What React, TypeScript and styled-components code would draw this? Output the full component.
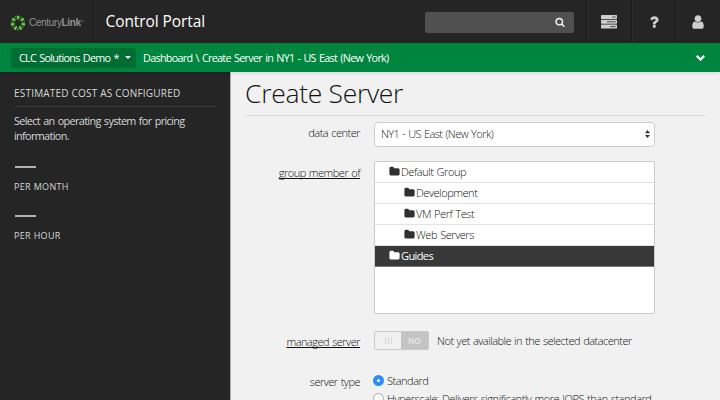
import React from "react";
import styled, { createGlobalStyle, css } from "styled-components";

const Global = createGlobalStyle`
  * { box-sizing: border-box; }
  html, body { margin: 0; }
  body {
    width: 720px;
    height: 400px;
    overflow: hidden;
    background: #f1f1f1;
    color: #333;
    font: 400 11px/15px "Open Sans", "Noto Sans", sans-serif;
  }
`;

const Page = styled.div`
  display: flex;
  flex-direction: column;
  width: 720px;
  height: 400px;
  overflow: hidden;
`;

const TopBar = styled.header`
  display: flex;
  flex: none;
  height: 43px;
  background: #252525;
`;

const Brand = styled.div`
  display: flex;
  align-items: center;
  width: 94px;
  padding: 2px 0 0 10px;
  border-right: 1px solid #1b1b1b;
  box-shadow: 1px 0 0 #2c2c2c;
`;

const BrandName = styled.span`
  margin-left: 3px;
  color: #929292;
  font: 400 10px/14px "Liberation Sans", Arial, sans-serif;
  letter-spacing: -0.35px;
  white-space: nowrap;
  b { font-weight: 700; }
  sup { font-size: 4px; line-height: 0; vertical-align: 3px; }
`;

const ProductName = styled.div`
  flex: 1;
  padding: 9px 0 0 11.5px;
  color: #fff;
  font-size: 15.5px;
  line-height: 24px;
  letter-spacing: -0.08px;
`;

const SearchBox = styled.div`
  display: flex;
  align-items: center;
  justify-content: flex-end;
  width: 149px;
  height: 21px;
  margin: 11.5px 12px 0 0;
  padding-right: 9px;
  border-radius: 2px;
  background: #505050;
  color: #f4f4f4;
`;

const TopButton = styled.div<{ $width: number }>`
  display: flex;
  align-items: center;
  justify-content: center;
  width: ${(p) => p.$width}px;
  padding-top: 1px;
  border-left: 1px solid #1b1b1b;
  box-shadow: inset 1px 0 0 #2c2c2c;
  color: #cfcfcf;
`;

const ContextBar = styled.nav`
  display: flex;
  align-items: center;
  flex: none;
  height: 29px;
  padding: 0 15px 0 11px;
  background: #00853f;
  color: #fff;
  font-size: 10.8px;
  letter-spacing: -0.7px;
  word-spacing: 1px;
  white-space: nowrap;
  z-index: 1;
  box-shadow: 0 1px 4px rgba(0, 0, 0, 0.12);
`;

const AccountMenu = styled.div`
  display: flex;
  align-items: center;
  justify-content: space-between;
  width: 125px;
  height: 20px;
  padding: 0 5px 1px 8px;
  border-radius: 2px;
  background: #006e33;
  letter-spacing: -0.69px;
`;

const Caret = styled.span`
  border: 3px solid transparent;
  border-top-color: #fff;
  border-bottom: 0;
`;

const Trail = styled.div`
  flex: 1;
  padding: 0 0 1px 7px;
`;

const Body = styled.div`
  display: flex;
  flex: 1;
  min-height: 0;
`;

const Sidebar = styled.aside`
  width: 230px;
  flex: none;
  padding: 13px 14px;
  background: #252525;
  color: #d8d8d8;
`;

const SideHeading = styled.h2`
  height: 22px;
  margin: 0 0 7px;
  border-bottom: 1px solid #3a3a3a;
  font-size: 10px;
  line-height: 16px;
  font-weight: 400;
  letter-spacing: 0.2px;
`;

const SideNote = styled.p`
  width: 190px;
  height: 29px;
  margin: 0;
  font-size: 10.8px;
  letter-spacing: -0.63px;
  word-spacing: 1px;
  line-height: 14.5px;
`;

const Price = styled.div`
  margin-top: 23px;
  height: 26px;
  font-size: 9px;
  line-height: 14px;
  letter-spacing: 0.33px;
`;

const Dash = styled.div`
  width: 21px;
  height: 2px;
  margin: 0 0 12px 1px;
  background: #b4b4b4;
`;

const Main = styled.main`
  flex: 1;
  min-width: 0;
  padding: 0 15px 0 14px;
  border-left: 1px solid #a9a9a9;
  color: #111;
`;

const Title = styled.h1`
  height: 44px;
  margin: 0 0 6px;
  border-bottom: 1px solid #d9d9d9;
  font-size: 26.5px;
  line-height: 43px;
  font-weight: 300;
  letter-spacing: -0.3px;
  white-space: nowrap;
`;

const contentText = css`
  font-size: 11px;
  font-weight: 300;
  letter-spacing: -0.5px;
  word-spacing: 0.7px;
  white-space: nowrap;
`;

const Field = styled.div<{ $height: number }>`
  display: flex;
  height: ${(p) => p.$height}px;
`;

const Label = styled.div<{ $top: number; $link?: boolean }>`
  width: 115px;
  padding-top: ${(p) => p.$top}px;
  margin-right: 14px;
  text-align: right;
  text-decoration: ${(p) => (p.$link ? "underline" : "none")};
  text-underline-offset: 1px;
  text-decoration-skip-ink: none;
  ${contentText}
`;

const Select = styled.div`
  display: flex;
  align-items: center;
  justify-content: space-between;
  width: 281px;
  height: 25px;
  padding: 0 4px 3px 6px;
  border: 1px solid #ccc;
  border-radius: 4px;
  background: #fff;
  color: #222;
  ${contentText}
  letter-spacing: -0.57px;
  svg { position: relative; top: 1px; }
`;

const GroupList = styled.div`
  width: 281px;
  height: 153px;
  border: 1px solid #ccc;
  border-radius: 2px;
  background: #fff;
`;

const GroupRow = styled.div<{ $nested?: boolean; $selected?: boolean }>`
  display: flex;
  align-items: center;
  gap: 1px;
  height: 21px;
  padding: 0 0 1px ${(p) => (p.$nested ? 29 : 14)}px;
  border-bottom: 1px solid #e3e3e3;
  color: #111;
  ${contentText}
  letter-spacing: -0.45px;
  svg { color: #303030; }
  ${(p) =>
    p.$selected &&
    css`
      background: #383838;
      border-color: #777;
      color: #fff;
      font-weight: 400;
      letter-spacing: -0.6px;
      svg { color: #fff; }
    `}
`;

const Toggle = styled.div`
  display: flex;
  width: 55px;
  height: 19px;
  border: 1px solid #c9c9c9;
  border-radius: 2px;
  background: #c4c4c4;
  overflow: hidden;
`;

const Knob = styled.div`
  display: flex;
  align-items: center;
  justify-content: center;
  gap: 2px;
  width: 26px;
  background: #f0f0f0;
`;

const Grip = styled.i`
  width: 1px;
  height: 7px;
  background: #d6d6d6;
`;

const ToggleText = styled.span`
  flex: 1;
  color: #e4e4e4;
  font: 700 8.5px/18px "Liberation Sans", Arial, sans-serif;
  text-align: center;
`;

const Hint = styled.span`
  padding: 2px 0 0 8px;
  ${contentText}
`;

const Options = styled.div`
  display: flex;
  flex-direction: column;
`;

const Option = styled.div`
  display: flex;
  align-items: center;
  gap: 3px;
  height: 18px;
  padding-bottom: 1px;
  ${contentText}
  letter-spacing: -0.47px;
`;

const Radio = styled.span<{ $on?: boolean }>`
  width: 11px;
  height: 11px;
  margin-left: -1px;
  border: ${(p) => (p.$on ? "4px solid #2c8df6" : "1px solid #aaa")};
  border-radius: 50%;
  background: #fff;
`;

const icons = {
  search:
    "M1216 832q0-185-131.5-316.5t-316.5-131.5-316.5 131.5-131.5 316.5 131.5 316.5 316.5 131.5 316.5-131.5 131.5-316.5zm512 832q0 52-38 90t-90 38q-54 0-90-38l-343-342q-179 124-399 124-143 0-273.5-55.5t-225-150-150-225-55.5-273.5 55.5-273.5 150-225 225-150 273.5-55.5 273.5 55.5 225 150 150 225 55.5 273.5q0 220-124 399l343 343q37 37 37 90z",
  folder:
    "M1728 608v704q0 92-66 158t-158 66h-1216q-92 0-158-66t-66-158v-960q0-92 66-158t158-66h320q92 0 158 66t66 158v32h672q92 0 158 66t66 158z",
  user:
    "M1536 1399q0 109-62.5 187t-150.5 78h-854q-88 0-150.5-78t-62.5-187q0-85 8.5-160.5t31.5-152 58.5-131 94-89 134.5-34.5q131 128 313 128t313-128q76 0 134.5 34.5t94 89 58.5 131 31.5 152 8.5 160.5zm-256-887q0 159-112.5 271.5t-271.5 112.5-271.5-112.5-112.5-271.5 112.5-271.5 271.5-112.5 271.5 112.5 112.5 271.5z",
  question:
    "M1088 1256v240q0 16-12 28t-28 12h-240q-16 0-28-12t-12-28v-240q0-16 12-28t28-12h240q16 0 28 12t12 28zm316-600q0 54-15.5 101t-35 76.5-55 59.5-57.5 43.5-61 35.5q-41 23-68.5 65t-27.5 67q0 17-12 32.5t-28 15.5h-240q-15 0-25.5-18.5t-10.5-37.5v-45q0-83 65-156.5t143-108.5q59-27 84-56t25-76q0-42-46.5-74t-107.5-32q-65 0-108 29-35 25-107 115-13 16-31 16-12 0-25-8l-164-125q-13-10-15.5-25t5.5-28q160-266 464-266 80 0 161 31t146 83 106 127.5 41 158.5z",
};

function Icon({ name, size }: { name: keyof typeof icons; size: number }) {
  return (
    <svg width={size} height={size} viewBox="0 0 1792 1792" fill="currentColor">
      <path d={icons[name]} />
    </svg>
  );
}

function BrandMark() {
  return (
    <svg width="16" height="16" viewBox="-8 -8 16 16">
      {Array.from({ length: 14 }, (_, i) => (
        <path
          key={i}
          d="M-.45 -3.4L-1.25 -6.9Q0 -8 1.25 -6.9L.45 -3.4Z"
          fill={["#a4cf38", "#08813f"][i % 2]}
          transform={`rotate(${i * (360 / 14)})`}
        />
      ))}
    </svg>
  );
}

function ServersIcon() {
  return (
    <svg width="16" height="14" viewBox="0 0 16 14">
      <g fill="#cfcfcf">
        <rect width="16" height="4" rx=".7" />
        <rect y="4.8" width="16" height="4" rx=".7" />
        <rect y="9.6" width="16" height="4" rx=".7" />
      </g>
      <path d="M11 2h3.7M6 6.8h8.7M9 11.6h5.7" stroke="#444" strokeWidth=".9" />
    </svg>
  );
}

const groups = [
  { name: "Default Group" },
  { name: "Development", nested: true },
  { name: "VM Perf Test", nested: true },
  { name: "Web Servers", nested: true },
  { name: "Guides", selected: true },
];

export default function App() {
  return (
    <Page>
      <Global />
      <TopBar>
        <Brand>
          <BrandMark />
          <BrandName>Century<b>Link</b><sup>®</sup></BrandName>
        </Brand>
        <ProductName>Control Portal</ProductName>
        <SearchBox><Icon name="search" size={10} /></SearchBox>
        <TopButton $width={45}><ServersIcon /></TopButton>
        <TopButton $width={44}><Icon name="question" size={16} /></TopButton>
        <TopButton $width={45}><Icon name="user" size={16} /></TopButton>
      </TopBar>
      <ContextBar>
        <AccountMenu>CLC Solutions Demo *<Caret /></AccountMenu>
        <Trail>Dashboard \ Create Server in NY1 - US East (New York)</Trail>
        <svg width="9" height="7" viewBox="0 0 9 7" fill="none" stroke="#fff" strokeWidth="2.2">
          <path d="M.8 1.9L4.5 5.6L8.2 1.9" />
        </svg>
      </ContextBar>
      <Body>
        <Sidebar>
          <SideHeading>ESTIMATED COST AS CONFIGURED</SideHeading>
          <SideNote>Select an operating system for pricing information.</SideNote>
          <Price><Dash />PER MONTH</Price>
          <Price><Dash />PER HOUR</Price>
        </Sidebar>
        <Main>
          <Title>Create Server</Title>
          <Field $height={39}>
            <Label $top={3}>data center</Label>
            <Select>
              NY1 - US East (New York)
              <svg width="5" height="8" viewBox="0 0 5 8" fill="#333">
                <path d="M0 3.3L2.5 0L5 3.3ZM0 4.9L2.5 8L5 4.9Z" />
              </svg>
            </Select>
          </Field>
          <Field $height={170}>
            <Label $top={4} $link>group member of</Label>
            <GroupList>
              {groups.map((g) => (
                <GroupRow key={g.name} $nested={g.nested} $selected={g.selected}>
                  <Icon name="folder" size={11} />
                  {g.name}
                </GroupRow>
              ))}
            </GroupList>
          </Field>
          <Field $height={41}>
            <Label $top={3} $link>managed server</Label>
            <Toggle>
              <Knob><Grip /><Grip /><Grip /></Knob>
              <ToggleText>NO</ToggleText>
            </Toggle>
            <Hint>Not yet available in the selected datacenter</Hint>
          </Field>
          <Field $height={40}>
            <Label $top={2}>server type</Label>
            <Options>
              <Option><Radio $on />Standard</Option>
              <Option><Radio />Hyperscale: Delivers significantly more IOPS than standard</Option>
            </Options>
          </Field>
        </Main>
      </Body>
    </Page>
  );
}
